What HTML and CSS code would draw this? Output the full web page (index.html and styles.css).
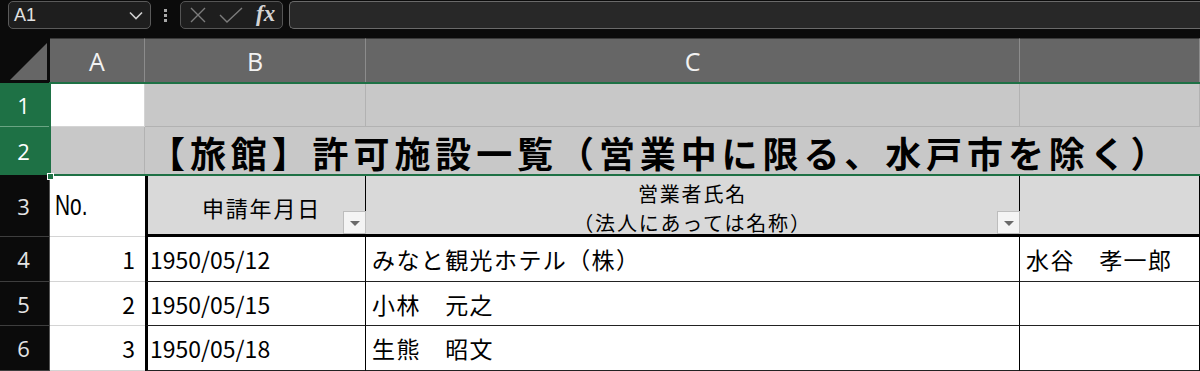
FILE: index.html
```html
<!DOCTYPE html>
<html lang="ja">
<head>
    <meta charset="UTF-8">
    <title>旅館 許可施設一覧</title>
    <link rel="stylesheet" href="styles.css">
</head>
<body>

    <div class="toolbar">
        <div class="namebox">
            <span>A1</span>
            <svg width="14" height="9" viewBox="0 0 14 9"><polyline points="1,1.5 7,7.5 13,1.5" fill="none" stroke="#d0d0d0" stroke-width="1.6"/></svg>
        </div>
        <div class="dots"><i></i><i></i><i></i></div>
        <div class="fxbox">
            <svg width="16" height="16" viewBox="0 0 16 16"><path d="M1 1 L15 15 M15 1 L1 15" stroke="#7c7c7c" stroke-width="1.4"/></svg>
            <svg width="24" height="16" viewBox="0 0 24 16"><polyline points="1,8 8,15 23,1" fill="none" stroke="#7c7c7c" stroke-width="1.4"/></svg>
            <span class="fx">fx</span>
        </div>
        <div class="formula"></div>
    </div>

    <div class="sheet">
        <!-- column headers -->
        <div class="corner">
            <svg width="50" height="45" viewBox="0 0 50 45"><polygon points="47,5 47,42 10,42" fill="#666"/></svg>
        </div>
        <div class="colhdr">A</div>
        <div class="colhdr">B</div>
        <div class="colhdr">C</div>
        <div class="colhdr"></div>

        <!-- row 1 -->
        <div class="rowhdr sel">1</div>
        <div class="c"></div>
        <div class="c gray"></div>
        <div class="c gray"></div>
        <div class="c gray"></div>

        <!-- row 2 -->
        <div class="rowhdr sel last">2</div>
        <div class="c gray"></div>
        <div class="c gray title">【旅館】許可施設一覧（営業中に限る、水戸市を除く）</div>

        <!-- row 3 -->
        <div class="rowhdr">3</div>
        <div class="c no"><span>No.</span></div>
        <div class="c hd tb first center">申請年月日<span class="dd"></span></div>
        <div class="c hd tb center two">
            <span class="line">営業者氏名</span>
            <span class="line">（法人にあっては名称）</span>
            <span class="dd"></span>
        </div>
        <div class="c hd tb"></div>

        <!-- data -->
        <div class="rowhdr">4</div>
        <div class="c num">1</div>
        <div class="c tb first">1950/05/12</div>
        <div class="c tb jp">みなと観光ホテル（株）</div>
        <div class="c tb jp">水谷　孝一郎</div>

        <div class="rowhdr">5</div>
        <div class="c num">2</div>
        <div class="c tb first">1950/05/15</div>
        <div class="c tb jp">小林　元之</div>
        <div class="c tb"></div>

        <div class="rowhdr">6</div>
        <div class="c num">3</div>
        <div class="c tb first">1950/05/18</div>
        <div class="c tb jp">生熊　昭文</div>
        <div class="c tb"></div>

        <div class="selection"></div>
        <div class="handle"></div>
    </div>

</body>
</html>
```

FILE: styles.css
```css
* {
    margin: 0;
    padding: 0;
    box-sizing: border-box;
}
body {
    width: 1200px;
    height: 371px;
    overflow: hidden;
    background-color: #0b0b0b;
    font-family: "Noto Sans CJK JP", sans-serif;
}

/* formula bar */
.toolbar {
    height: 38px;
    display: flex;
    align-items: flex-start;
    padding: 1px 0 0 8px;
}
.namebox {
    width: 143px;
    height: 28px;
    border: 1px solid #5a5a5a;
    border-radius: 5px;
    background-color: #1e1e1e;
    display: flex;
    align-items: center;
    justify-content: space-between;
    padding: 0 7px 0 5px;
    color: #e2e2e2;
    font: 18px "Liberation Sans", sans-serif;
}
.dots {
    width: 29px;
    display: flex;
    flex-direction: column;
    align-items: center;
    gap: 2px;
    padding-top: 8px;
}
.dots i {
    width: 3px;
    height: 3px;
    background-color: #a8a8a8;
}
.fxbox {
    width: 103px;
    height: 28px;
    border: 1px solid #555;
    border-radius: 5px;
    background-color: #1e1e1e;
    display: flex;
    align-items: center;
    gap: 13px;
    padding-left: 9px;
}
.fx {
    color: #d4d4d4;
    font: italic bold 23px "Liberation Serif", serif;
    margin-top: -3px;
}
.formula {
    flex: 1;
    margin-left: 6px;
    height: 28px;
    border: 1px solid #6a6a6a;
    border-right: none;
    border-radius: 5px 0 0 5px;
    background-color: #282828;
}

/* grid */
.sheet {
    position: relative;
    display: grid;
    grid-template-columns: 50px 95px 221px 654px 180px;
    grid-template-rows: 45px 44px 48px 62px 45px 44px 45px;
}
.corner {
    background-color: #0b0b0b;
}
.colhdr {
    background-color: #666;
    color: #f2f2f2;
    font: 25px "Open Sans", sans-serif;
    display: flex;
    align-items: center;
    justify-content: center;
    border-right: 1px solid #8c8c8c;
    border-top: 1px solid #3a3a3a;
}
.rowhdr {
    background-color: #0b0b0b;
    color: #e4e4e4;
    font: 22px "Open Sans", sans-serif;
    display: flex;
    align-items: center;
    justify-content: center;
    padding-right: 2px;
    border-bottom: 1px solid #3e3e3e;
    border-right: 1px solid #555;
}
.rowhdr.sel {
    background-color: #1e7145;
    color: #fff;
    border-bottom-color: #6aa583;
}
.rowhdr.sel.last {
    border-bottom-color: #1e7145;
}

.c {
    background-color: #fff;
    border-right: 1px solid #d4d4d4;
    border-bottom: 1px solid #d4d4d4;
    font-size: 23px;
    color: #000;
    display: flex;
    align-items: center;
    padding: 0 6px;
    white-space: nowrap;
    position: relative;
}
.jp {
    letter-spacing: 1.4px;
}
.gray {
    background-color: #c8c8c8;
    border-color: #b2b2b2;
}
.title {
    grid-column: span 3;
    border-right: none;
    align-items: flex-end;
    padding: 0 0 4px 4px;
    font-size: 36px;
    font-weight: bold;
    letter-spacing: 4.9px;
    line-height: 1;
}
.hd {
    background-color: #d9d9d9;
}
.tb {
    border-right-color: #000;
    border-bottom-color: #222;
}
.hd.tb {
    border-bottom: 3px solid #000;
}
.first {
    border-left: 3px solid #000;
    padding-left: 2px;
}
.center {
    justify-content: center;
    text-align: center;
}
.first.center {
    font-size: 22px;
    letter-spacing: 1.8px;
    padding-left: 16px;
    padding-top: 4px;
}
.two {
    flex-direction: column;
    justify-content: flex-start;
    font-size: 20px;
    letter-spacing: 1.8px;
    line-height: 29px;
    padding-top: 4px;
}
.line {
    display: block;
}
.no {
    padding-left: 5px;
    border-right: none;
}
.no span {
    display: inline-block;
    font: 29px "Liberation Sans", sans-serif;
    transform: scaleX(0.72);
    transform-origin: left center;
}
.num {
    justify-content: flex-end;
    padding-right: 10px;
    border-right: none;
}
.dd {
    position: absolute;
    right: -1px;
    bottom: 0;
    width: 23px;
    height: 23px;
    background-color: #f4f4f4;
    border: 1px solid #bdbdbd;
}
.dd::after {
    content: "";
    position: absolute;
    left: 6px;
    top: 9px;
    border-left: 5px solid transparent;
    border-right: 5px solid transparent;
    border-top: 5px solid #6a6a6a;
}

/* selected rows 1:2 */
.selection {
    position: absolute;
    left: 49px;
    top: 44px;
    width: 1160px;
    height: 94px;
    border: 2px solid #1e7145;
    border-right: none;
}
.handle {
    position: absolute;
    left: 47px;
    top: 135px;
    width: 7px;
    height: 7px;
    background-color: #1e7145;
    border: 1px solid #fff;
}
```
